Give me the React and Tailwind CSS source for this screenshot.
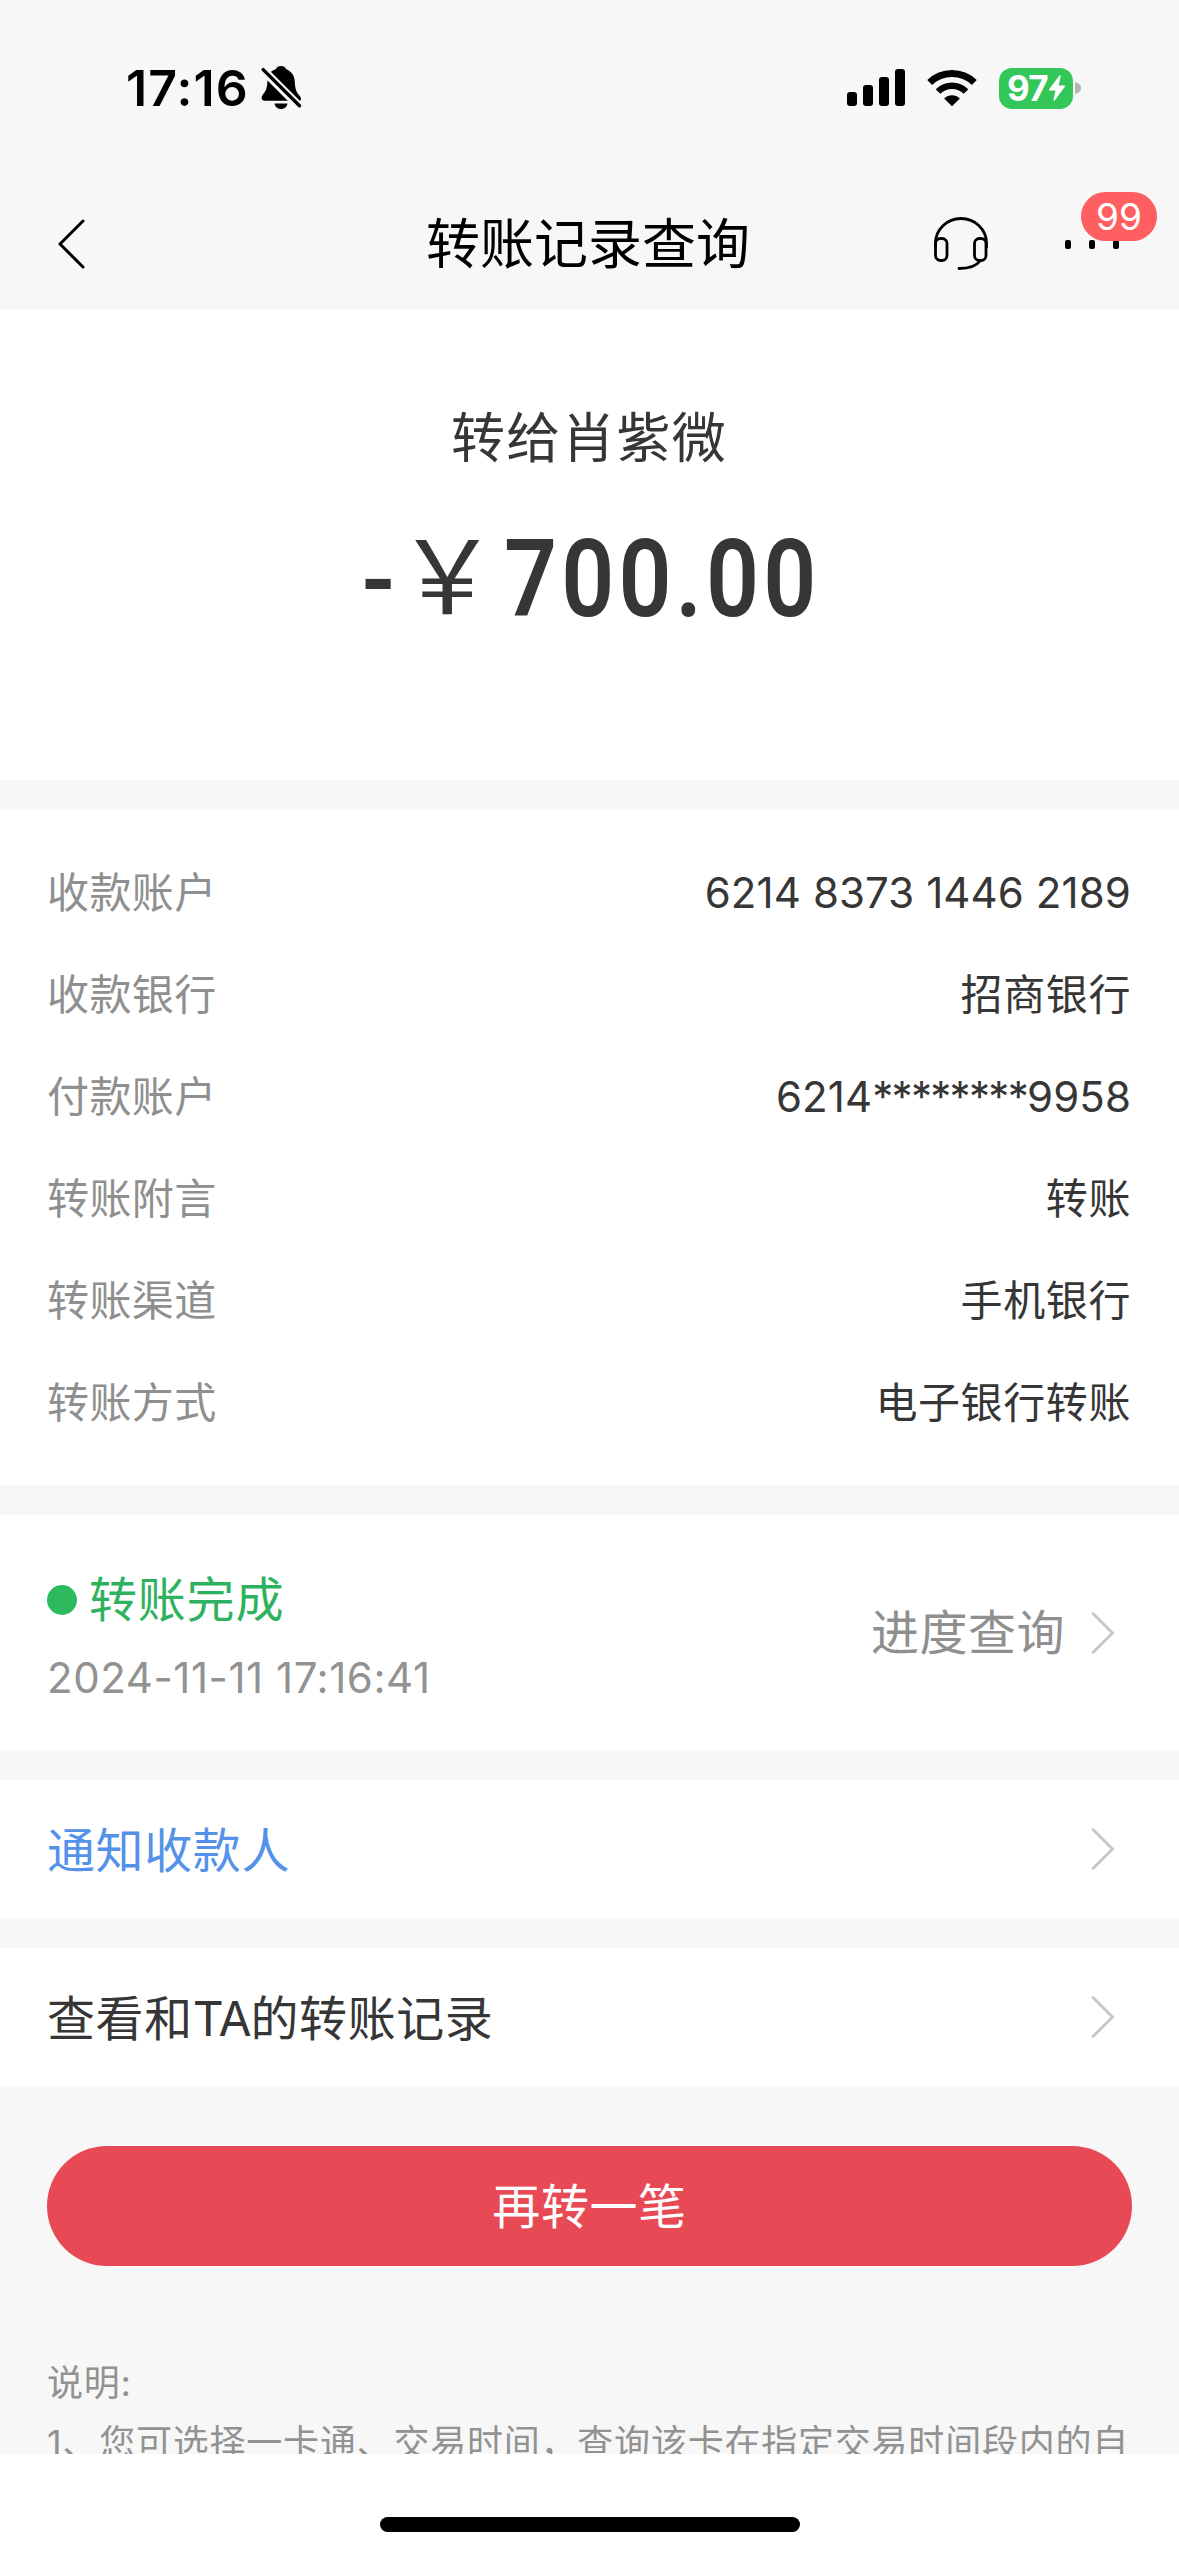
const details = [
  { label: "收款账户", value: "6214 8373 1446 2189", numeric: true },
  { label: "收款银行", value: "招商银行" },
  {
    label: "付款账户",
    value: (
      <>
        6214<span className="tracking-[-1.7px]">********</span>9958
      </>
    ),
    numeric: true,
  },
  { label: "转账附言", value: "转账" },
  { label: "转账渠道", value: "手机银行" },
  { label: "转账方式", value: "电子银行转账" },
];

const Chevron = () => (
  <svg width="24" height="44" viewBox="0 0 24 44" fill="none" className="shrink-0">
    <path d="M2 2.5 21.5 22 2 41.5" stroke="#c6c6c6" strokeWidth="2.8" strokeLinecap="round" />
  </svg>
);

const BellOff = () => (
  <svg width="42" height="46" viewBox="0 0 42 46" className="ml-3">
    <path d="M20 1c3 0 4.600 1.700 5.200 3.200 5.300 1.900 8.300 6.500 8.600 12.300.2 6.500 1.200 10 3.700 13 1.200 1.500 2.500 2.600 2.500 4.500 0 .8-.5 1.500-1 1.800H4c-2.200 0-3.400-1.200-3.400-3 0-2.400 2-3.600 3.500-6.300 2-3.500 2.100-6.400 2.400-11.500.4-5.600 3.200-9.300 8.300-10.800C15.500 2.500 17 1 20 1Z" />
    <path d="M13.500 38.500h13c-.5 3.300-3.100 5.500-6.500 5.500s-6-2.200-6.500-5.500Z" />
    <path d="M2 5 39 42" stroke="#f7f7f7" strokeWidth="8.500" />
    <path d="M2.200 4.600 38.500 40.800" stroke="#000" strokeWidth="3.400" strokeLinecap="round" />
  </svg>
);

const SignalBars = () => (
  <svg width="58" height="38" viewBox="0 0 58 38">
    <rect x="0" y="23" width="10" height="14" rx="3" />
    <rect x="16" y="16" width="10" height="21" rx="3" />
    <rect x="32" y="8" width="10" height="29" rx="3" />
    <rect x="48" y="0" width="10" height="37" rx="3" />
  </svg>
);

const Wifi = () => (
  <svg width="50" height="38" viewBox="0 0 50 38" fill="none" stroke="#000">
    <path d="M2.700 13.500a32 32 0 0 1 44.600 0" strokeWidth="7" />
    <path d="M11 22.500a20 20 0 0 1 28 0" strokeWidth="6.500" />
    <path d="M25 37.300 17.200 29.500c4.300-4.300 11.300-4.300 15.600 0Z" fill="#000" stroke="none" />
  </svg>
);

const Battery = () => (
  <div className="flex items-center">
    <div className="flex h-[41px] w-[74px] items-center rounded-[13px] bg-[#33c759] pl-[8px]">
      <span className="text-[35px] leading-none font-bold tracking-[-0.8px] text-white">97</span>
      <svg width="18" height="27" viewBox="0 0 18 27" fill="#fff">
        <path d="M11.500.5 1 14.500c-.4.6-.1 1 .5 1h6L5.500 25c-.2.900.7 1.200 1.200.6L17 11.500c.4-.6.1-1-.5-1h-5.800L12.700 1.300c.2-.9-.7-1.400-1.200-.8Z" />
      </svg>
    </div>
    <svg width="6" height="12" viewBox="0 0 6 12" className="ml-0.5">
      <path d="M0 0c4 1 6 3 6 6s-2 5-6 6Z" fill="#b5b5b5" />
    </svg>
  </div>
);

const StatusBar = () => (
  <div className="flex h-[176px] items-center justify-between pr-[98px] pl-[126px]">
    <div className="flex items-center">
      <span className="text-[50px] leading-none font-semibold tracking-[1.1px]">17:16</span>
      <BellOff />
    </div>
    <div className="flex items-center">
      <SignalBars />
      <span className="ml-[22px] flex">
        <Wifi />
      </span>
      <span className="ml-[22px] flex">
        <Battery />
      </span>
    </div>
  </div>
);

const Header = () => (
  <header className="grid h-[133px] grid-cols-[1fr_auto_1fr] items-center pt-[3px] pr-[60px] pl-[57px]">
    <svg width="28" height="52" viewBox="0 0 28 52" fill="none">
      <path d="M26 3 3 26l23 23" stroke="#000" strokeWidth="3" strokeLinecap="round" strokeLinejoin="round" />
    </svg>
    <h1 className="pt-px text-[54px] leading-none text-black">转账记录查询</h1>
    <div className="flex items-center justify-end gap-[76px]">
      <svg width="56" height="56" viewBox="0 0 56 56" fill="none" stroke="#000" strokeWidth="2.800" strokeLinecap="round">
        <path d="M2.500 31v-4a25.500 24.500 0 0 1 51 0v4" />
        <rect x="2.500" y="22.500" width="11.500" height="22" rx="5" />
        <rect x="41.500" y="22.500" width="11.500" height="22" rx="5" />
        <path d="M47 45c-4 5.500-10 7.500-21 7.500" />
      </svg>
      <div className="relative flex gap-[18px]">
        <span className="h-[9px] w-1.5 rounded-xs bg-black" />
        <span className="h-[9px] w-1.5 rounded-xs bg-black" />
        <span className="h-[9px] w-1.5 rounded-xs bg-black" />
        <span className="absolute -top-12 left-4 flex h-[49px] w-[76px] items-center justify-center rounded-full bg-[#ff5f60] text-[37px] leading-none text-white">
          99
        </span>
      </div>
    </div>
  </header>
);

const Row = ({ label, value, numeric }) => (
  <div className="flex h-[102px] items-center justify-between">
    <span className="text-[42px] leading-none tracking-[0.4px] text-[#8f8f8f]">{label}</span>
    <span className={numeric ? "text-[42px] leading-none tracking-[0.1px]" : "text-[42px] leading-none tracking-[0.6px]"}>
      {value}
    </span>
  </div>
);

const LinkRow = ({ className, children }) => (
  <div className="flex h-[138px] shrink-0 items-center justify-between bg-white pr-[64px] pl-[47px]">
    <span className={className}>{children}</span>
    <Chevron />
  </div>
);

export default function App() {
  return (
    <div className="flex h-[2556px] w-[1179px] flex-col overflow-hidden bg-[#f7f7f7] font-['Inter','Noto_Sans_CJK_SC',sans-serif] text-[#363636]">
      <div className="text-black">
        <StatusBar />
        <Header />
      </div>

      <section className="flex h-[471px] shrink-0 flex-col items-center bg-white pt-[102px]">
        <p className="pr-px text-[54px] leading-[56px] tracking-[1.2px]">转给肖紫微</p>
        <p className="mt-[57px] flex items-center pl-px text-[108px] leading-[106px] font-semibold whitespace-nowrap font-['Roboto','Noto_Sans_CJK_SC',sans-serif]">
          <span className="origin-right scale-x-90 pt-[3px] font-medium">-</span>
          <span className="mr-[6px] ml-0.5 text-[102px] font-normal">￥</span>
          <span className="mr-[-50px] origin-left scale-x-86 tracking-[4.8px]">700.00</span>
        </p>
      </section>

      <section className="mt-[30px] h-[675px] shrink-0 bg-white pt-8 pr-12 pl-[47px]">
        {details.map((item) => (
          <Row key={item.label} {...item} />
        ))}
      </section>

      <section className="mt-[30px] flex h-[235px] shrink-0 items-center justify-between bg-white pr-[64px] pl-[47px]">
        <div className="flex flex-col gap-[18px] pt-3">
          <div className="flex items-center">
            <span className="size-[30px] rounded-full bg-[#2dba5c]" />
            <span className="ml-3 text-[48px] leading-[60px] tracking-[0.8px] text-[#2fb260]">转账完成</span>
          </div>
          <span className="text-[42px] leading-[60px] tracking-[0.55px] text-[#929292]">2024-11-11 17:16:41</span>
        </div>
        <div className="flex items-center gap-[26px]">
          <span className="text-[48px] leading-none tracking-[0.5px] text-[#8f8f8f]">进度查询</span>
          <Chevron />
        </div>
      </section>

      <div className="mt-[30px] flex flex-col gap-[30px]">
        <LinkRow className="pt-[3px] text-[48px] leading-none tracking-[0.6px] text-[#5492ea]">通知收款人</LinkRow>
        <LinkRow className="pt-[3px] text-[48px] leading-none tracking-[0.6px]">
          查看和<span className="tracking-[-1.2px]">TA</span>的转账记录
        </LinkRow>
      </div>

      <button className="mx-[47px] mt-[60px] flex h-[120px] shrink-0 items-center justify-center rounded-full bg-[#e84a55] pt-[2px] text-[48px] leading-none tracking-[0.6px] text-white">
        再转一笔
      </button>

      <div className="mt-[87px] h-[101px] shrink-0 overflow-hidden pl-[47px] text-[36px] leading-[60px] tracking-[0.78px] whitespace-nowrap text-[#929292]">
        <p>说明:</p>
        <p>1、您可选择一卡通、交易时间，查询该卡在指定交易时间段内的自</p>
      </div>

      <footer className="flex grow justify-center bg-white pt-[63px]">
        <div className="h-[15px] w-[420px] rounded-full bg-black" />
      </footer>
    </div>
  );
}
